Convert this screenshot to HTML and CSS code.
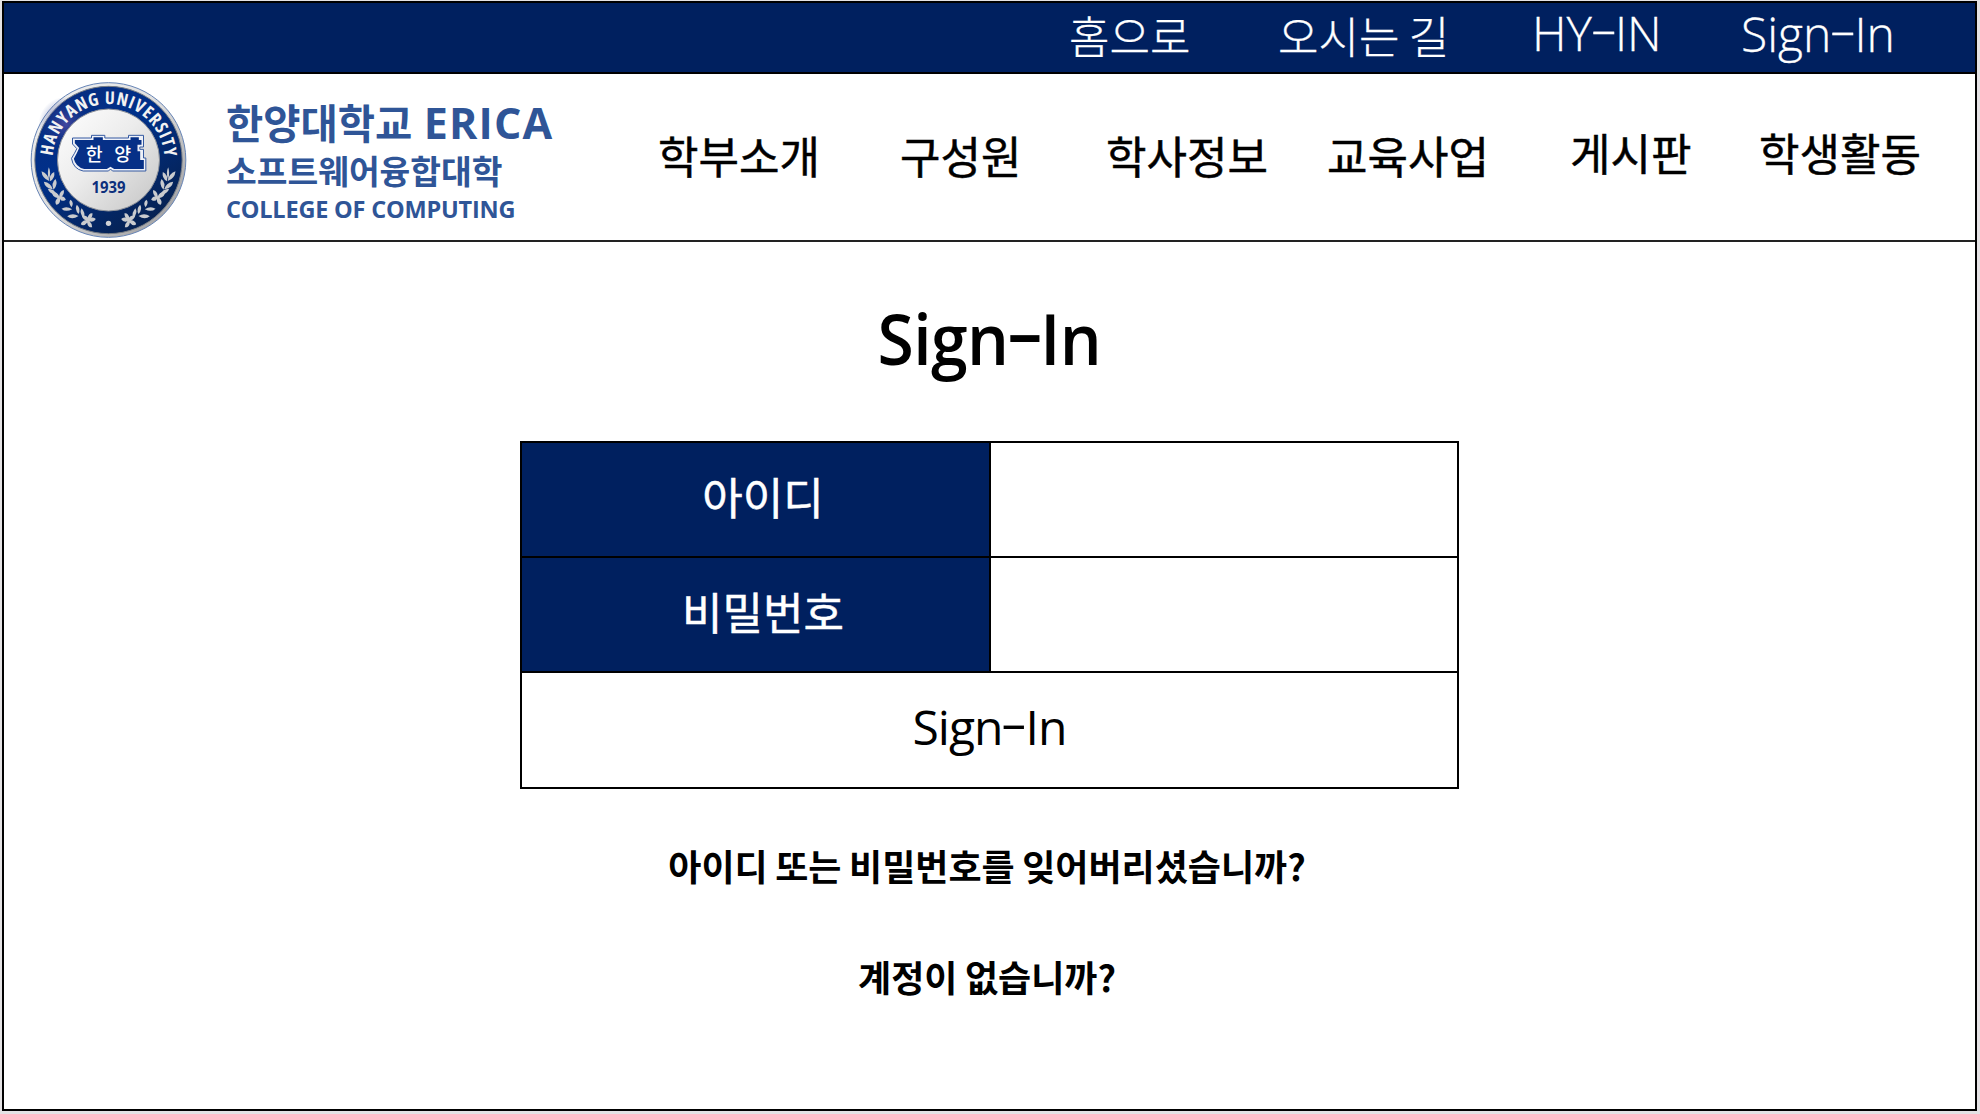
FILE: index.html
```html
<!DOCTYPE html>
<html lang="ko">
<head>
<meta charset="utf-8">
<title>Sign-In</title>
<link rel="stylesheet" href="styles.css">
</head>
<body>
<div class="page">
  <nav class="topbar">
    <a class="top-home">홈으로</a>
    <a class="top-map">오시는 길</a>
    <a class="top-hyin latin">HY<span class="dash">-</span>IN</a>
    <a class="top-sign latin">Sign<span class="dash">-</span>In</a>
  </nav>
  <header class="header">
    <svg class="emblem" viewBox="90 64 470 468">
      <defs>
        <linearGradient id="rim" x1="0" y1="0" x2="1" y2="1"><stop offset="0" stop-color="#f4f4f4"/><stop offset=".5" stop-color="#dcdcdc"/><stop offset="1" stop-color="#8f9092"/></linearGradient>
        <linearGradient id="disc" x1="0" y1="0" x2="1" y2="1"><stop offset="0" stop-color="#ffffff"/><stop offset=".45" stop-color="#ececec"/><stop offset="1" stop-color="#c4c4c4"/></linearGradient>
        <linearGradient id="band" x1="0" y1="0" x2=".7" y2="1"><stop offset="0" stop-color="#0a2c7c"/><stop offset=".45" stop-color="#00308a"/><stop offset="1" stop-color="#062150"/></linearGradient>
        <radialGradient id="glow"><stop offset="0" stop-color="#5a50a8"/><stop offset="1" stop-color="#1c3488" stop-opacity="0"/></radialGradient>
        <path id="arc" d="M157 298A168 168 0 0 1 493 298"/>
        <g id="laurel" fill="#c9cbce">
          <path d="M146 356Q140 338 146 320Q154 338 146 356Z"/>
          <path d="M147 361Q126 354 124 332Q145 340 147 361Z"/>
          <path d="M149 362Q146 342 162 334Q166 353 149 362Z"/>
          <path d="M158 386Q134 382 131 363Q153 366 158 386Z"/>
          <path d="M160 387Q152 367 166 355Q175 372 160 387Z"/>
          <path d="M170 402Q148 401 143 384Q163 384 170 402Z"/>
          <path d="M155 394Q172 393 177 407Q193 405 197 417Q184 425 180 415Q181 431 168 432Q162 422 172 412Q156 409 155 394Z"/>
          <path d="M177 407Q179 390 191 388Q194 402 180 412Z"/>
          <path d="M214 440Q203 425 211 417Q223 426 214 440Z"/>
          <path d="M216 446Q196 456 184 444Q199 434 216 446Z"/>
          <path d="M235 460Q222 445 230 432Q243 444 235 460Z"/>
          <path d="M235 466Q216 479 201 467Q217 455 235 466Z"/>
          <path d="M251 472Q236 458 244 443Q257 456 251 472Z"/>
          <path d="M245 464Q260 464 265 474Q280 466 287 475Q281 486 268 482Q277 490 276 500Q263 501 261 486Q250 499 242 491Q245 480 257 479Q246 475 245 464Z"/>
          <path d="M262 473Q266 456 277 458Q278 472 266 478Z"/>
        </g>
      </defs>
      <circle cx="325" cy="298" r="232" fill="url(#rim)" stroke="#6684b6" stroke-width="3"/>
      <circle cx="325" cy="298" r="221" fill="url(#band)" stroke="#777d85" stroke-width="3"/>
      <circle cx="197" cy="190" r="82" fill="url(#glow)" opacity=".75"/>
      <circle cx="325" cy="298" r="153" fill="url(#disc)" stroke="#8c9098" stroke-width="3"/>
      <text class="ring-text"><textPath href="#arc" startOffset="12" textLength="506" lengthAdjust="spacing">HANYANG UNIVERSITY</textPath></text>
      <use href="#laurel"/>
      <use href="#laurel" transform="translate(650 0) scale(-1 1)"/>
      <circle cx="325" cy="488" r="8" fill="#d0d2d5"/>
      <path d="M217 232H274V224H314V232H385V224H430V259H419V266H430V292H437V331H337L331 325L325 331H249Q219 325 214 293Q224 277 230 264L217 250Z" fill="#eef1f8" stroke="#3459a0" stroke-width="3"/>
      <path d="M224 238H280V230H308V238H391V230H416V238H424V252H412V272H420V298H431V325H342L331 318L320 325H252Q226 318 221 294Q230 279 237 262L224 248Z" fill="#063087"/>
      <text class="plate-text" x="257" y="302" textLength="136">한 양</text>
      <text class="year-text" x="274" y="396" textLength="102" lengthAdjust="spacingAndGlyphs">1939</text>
    </svg>
    <div class="brand">
      <div class="brand-univ">한양대학교 <span class="brand-erica">ERICA</span></div>
      <div class="brand-college">소프트웨어융합대학</div>
      <div class="brand-en">COLLEGE OF COMPUTING</div>
    </div>
    <nav class="menu">
      <a class="m-intro">학부소개</a>
      <a class="m-people">구성원</a>
      <a class="m-info">학사정보</a>
      <a class="m-edu">교육사업</a>
      <a class="m-board">게시판</a>
      <a class="m-club">학생활동</a>
    </nav>
  </header>
  <main class="main">
    <h1 class="title latin">Sign<span class="dash">-</span>In</h1>
    <form class="login">
      <label class="cell label">아이디</label><div class="cell field"></div>
      <label class="cell label">비밀번호</label><div class="cell field"></div>
      <div class="cell submit latin"><span>Sign<span class="dash">-</span>In</span></div>
    </form>
    <a class="help forgot">아이디 또는 비밀번호를 잊어버리셨습니까?</a>
    <a class="help join">계정이 없습니까?</a>
  </main>
</div>
</body>
</html>
```
FILE: styles.css
```css
* { box-sizing: border-box; }
body {
  margin: 0;
  padding: 1px 3px 3px 2px;
  height: 1114px;
  overflow: hidden;
  background: #e4e2e4;
  color: #000;
  font-family: "Noto Sans CJK KR", sans-serif;
}
.page {
  width: 1975px;
  height: 1110px;
  border: 2px solid #000;
  background: #fff;
  display: flex;
  flex-direction: column;
}
.latin { font-family: "Open Sans", "Noto Sans CJK KR", sans-serif; }
.dash {
  display: inline-block;
  margin: 0 0.08em;
  letter-spacing: 0;
  transform: translateY(-0.1em) scaleX(1.75);
}
.topbar {
  height: 71px;
  flex: none;
  display: flex;
  align-items: flex-start;
  background: #00205f;
  border-bottom: 2px solid #000;
  color: #fff;
  font-size: 44px;
  font-weight: 300;
  line-height: 64px;
  white-space: nowrap;
  -webkit-text-stroke: 0.3px #fff;
}
.top-home { margin-left: 1065px; width: 209px; }
.top-map { width: 254px; word-spacing: -3px; }
.top-hyin { width: 209px; font-size: 48px; line-height: 60px; }
.top-sign { font-size: 48px; line-height: 62px; }
.header {
  height: 168px;
  flex: none;
  display: flex;
  align-items: flex-start;
  border-bottom: 2px solid #222;
  white-space: nowrap;
}
.emblem { width: 157px; height: 156px; margin: 8px 0 0 26px; flex: none; }
.ring-text { font: bold 53px "Open Sans", sans-serif; font-stretch: 75%; fill: #f2f2f2; }
.plate-text { font: 500 55px "Noto Sans CJK KR", sans-serif; fill: #fff; }
.year-text { font: bold 46px "Open Sans", sans-serif; fill: #0c2f7c; }
.brand {
  margin-left: 39px;
  width: 432px;
  padding-top: 18px;
  color: #2f5597;
  font-weight: 700;
}
.brand-univ { font-size: 40.5px; line-height: 60px; height: 55px; }
.brand-erica { font: 700 43px/50px "Open Sans", sans-serif; letter-spacing: 1.2px; }
.brand-college { font-size: 33.4px; line-height: 46px; height: 42px; }
.brand-en { font: 700 23.5px/40px "Open Sans", sans-serif; letter-spacing: -0.2px; }
.menu {
  display: grid;
  grid-template-columns: 242px 206px 221px 243px 189px 170px;
  font-size: 44px;
  line-height: 64px;
  padding-top: 49px;
  -webkit-text-stroke: 0.5px #000;
}
.m-board, .m-club { margin-top: -3px; }
.main {
  flex: 1;
  display: flex;
  flex-direction: column;
  align-items: center;
}
.title {
  margin: 46px 0 0;
  font-size: 71px;
  line-height: 100px;
  font-weight: 600;
  letter-spacing: -0.6px;
  transform: scaleX(0.93);
}
.login {
  margin-top: 53px;
  width: 939px;
  display: grid;
  grid-template-columns: 469px 468px;
  grid-template-rows: 115px 115px 116px;
  border: 2px solid #000;
  border-right: 0;
  border-bottom: 0;
  font-size: 44px;
}
.cell {
  display: flex;
  align-items: center;
  justify-content: center;
  border-right: 2px solid #000;
  border-bottom: 2px solid #000;
}
.label {
  background: #00205f;
  color: #fff;
  padding: 0 0 8px 15px;
  -webkit-text-stroke: 0.5px #fff;
}
.submit { grid-column: 1 / 3; font-size: 48px; padding-bottom: 7px; letter-spacing: -1px; }
.help { font-size: 36px; line-height: 52px; font-weight: 700; word-spacing: -2.5px; }
.forgot { margin: 50px 5px 0 0; }
.join { margin: 59px 5px 0 0; }
```
